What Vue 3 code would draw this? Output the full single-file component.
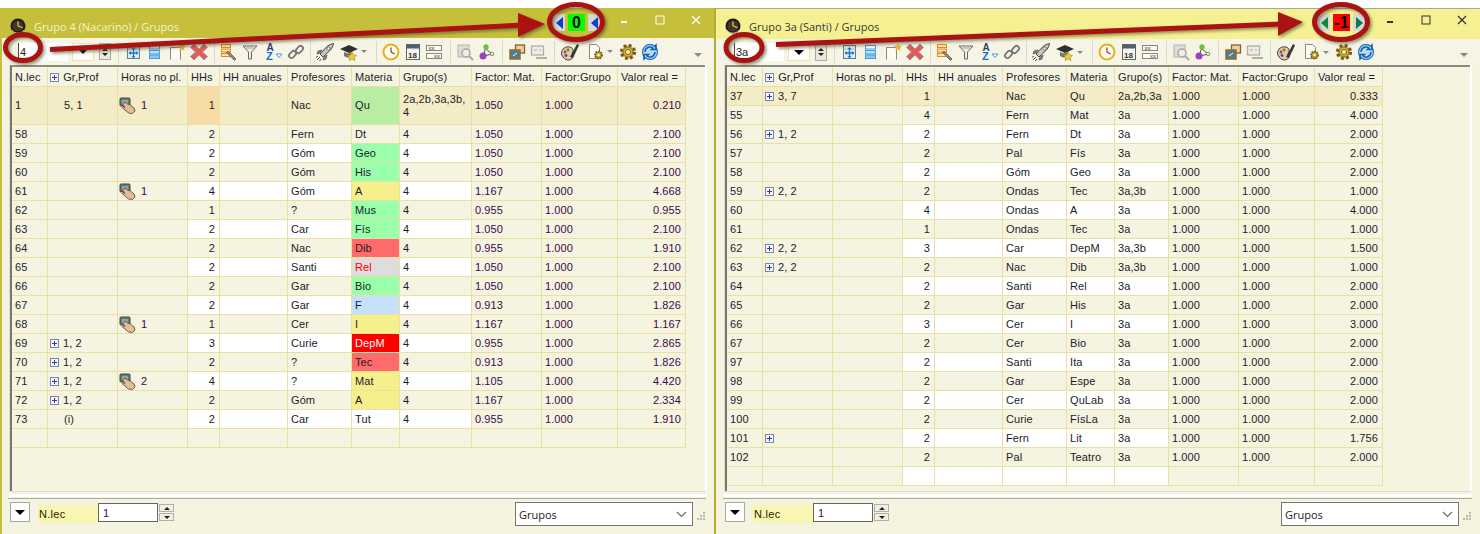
<template>
  <div class="desktop">
    <svg class="defs" width="0" height="0">
      <defs>
        <symbol id="i-clock-dark" viewBox="0 0 16 16">
          <circle cx="8" cy="8" r="7.500" fill="#1e1a16"/>
          <circle cx="8" cy="8" r="5.600" fill="#40362a"/>
          <path d="M8 8V3.500M8 8l4.500 1.600" stroke="#f0c040" stroke-width="1.300" fill="none"/>
          <path d="M2 12a7.500 7.500 0 0 0 12 0" stroke="#b0a890" stroke-width="1" fill="none"/>
        </symbol>
        <symbol id="i-move" viewBox="0 0 20 20">
          <rect x="4.500" y="3.500" width="12" height="13" fill="#e4ecf0" stroke="#5f7f96"/>
          <path d="M4.500 7h12" stroke="#a8bcc8"/>
          <path d="M10.500 6v9M6.500 11h8" stroke="#1478c0" stroke-width="1.300"/>
          <path d="M10.500 5l2 2.200h-4zM10.500 16.500l2-2.200h-4zM5.500 11l2.200-2v4zM15.500 11l-2.200-2v4z" fill="#1478c0"/>
        </symbol>
        <symbol id="i-rows" viewBox="0 0 20 20">
          <rect x="5.500" y="3.500" width="10" height="3.500" fill="#fbfdff" stroke="#3f9fe0"/>
          <rect x="5.500" y="8.500" width="10" height="3.500" fill="#bfe0f8" stroke="#3f9fe0"/>
          <rect x="5.500" y="13" width="10" height="3.500" fill="#8fc8f0" stroke="#3f9fe0"/>
        </symbol>
        <symbol id="i-page" viewBox="0 0 20 20">
          <path d="M2.500 17.500v-12h10v12" fill="#fbfbf4" stroke="#8a8a80"/>
          <path d="M14 1l1 2.500 3 .5-2 2 .6 3-2.600-1.500-2.600 1.500.6-3-2-2 3-.5z" fill="#e8b830"/>
        </symbol>
        <symbol id="i-x" viewBox="0 0 20 20">
          <path d="M5 2l5 5 5-5 3.500 3.500-5 4.500 5 4.500L15 18l-5-5-5 5-3.500-3.500 5-4.500-5-4.500z" fill="#e85858" stroke="#9a9a98"/>
        </symbol>
        <symbol id="i-lines" viewBox="0 0 20 20">
          <rect x="2.500" y="2.500" width="9" height="3" fill="#fbe2b8" stroke="#e88a10"/>
          <rect x="2.500" y="7" width="9" height="3" fill="#fbe2b8" stroke="#e88a10"/>
          <rect x="2.500" y="11.500" width="9" height="3" fill="#fbe2b8" stroke="#e88a10"/>
          <path d="M9 9l8 8-1.500 1.500-8-8z" fill="#8a8a80" stroke="#404040" stroke-width=".6"/>
        </symbol>
        <symbol id="i-funnel" viewBox="0 0 20 20">
          <path d="M3 4h14l-5.500 6v7h-3v-7z" fill="#eeeee6" stroke="#6a6a66"/>
          <path d="M5.500 6h9" stroke="#a0a09a"/>
        </symbol>
        <symbol id="i-az" viewBox="0 0 20 20">
          <text x="3.500" y="8.500" font-size="10" font-weight="700" font-family="Liberation Sans, sans-serif" fill="#2a3f70">A</text>
          <text x="3" y="18" font-size="11" font-weight="700" font-family="Liberation Sans, sans-serif" fill="#1070c8">Z</text>
          <path d="M13 12h6l-3 3.500z" fill="#fff" stroke="#3f9fe0"/>
        </symbol>
        <symbol id="i-chain" viewBox="0 0 20 20">
          <rect x="2.500" y="10" width="8" height="5" rx="2.500" transform="rotate(-45 6.500 12.500)" fill="none" stroke="#77777a" stroke-width="1.800"/>
          <rect x="9.500" y="5" width="8" height="5" rx="2.500" transform="rotate(-45 13.500 7.500)" fill="none" stroke="#77777a" stroke-width="1.800"/>
        </symbol>
        <symbol id="i-rocket" viewBox="0 0 20 20">
          <path d="M5 12L12 4.500Q15 2 18.500 1.500 18 5 15.500 8L8 15z" fill="#c4c4c0" stroke="#4a4a46"/>
          <path d="M7 8L3 9l-1 3 3-1zM12 13l-1 4-3 1 1-3z" fill="#8a8a86" stroke="#4a4a46" stroke-width=".7"/>
          <circle cx="13.500" cy="6.500" r="1.500" fill="#fff" stroke="#4a4a46" stroke-width=".7"/>
          <path d="M2 18l3-3M1 15.500l2-1.500M4.500 19l1.500-2" stroke="#4a4a46"/>
        </symbol>
        <symbol id="i-cap" viewBox="0 0 20 20">
          <path d="M1 7l9-4 9 4-9 4z" fill="#30302c"/>
          <path d="M5 10v4c3 2 7 2 8 0v-4l-4 1.500z" fill="#77776f"/>
          <path d="M13 10l1.500 3 3 .5-2.200 2 .5 3-2.800-1.500-2.800 1.500.5-3-2.200-2 3-.5z" fill="#f0d030" stroke="#8a7010" stroke-width=".5"/>
        </symbol>
        <symbol id="i-clock" viewBox="0 0 20 20">
          <circle cx="10" cy="10" r="7.500" fill="#fdfdf2" stroke="#e8b020" stroke-width="2"/>
          <path d="M10 5.500V10l3.500 2" fill="none" stroke="#a03020" stroke-width="1.200"/>
        </symbol>
        <symbol id="i-cal" viewBox="0 0 20 20">
          <rect x="3.500" y="2.500" width="13" height="15" fill="#f4f4f0" stroke="#66665f"/>
          <rect x="4" y="3" width="12" height="3.500" fill="#4a5f7a"/>
          <text x="5" y="15.500" font-size="8" font-weight="700" font-family="Liberation Sans, sans-serif" fill="#333">18</text>
        </symbol>
        <symbol id="i-xx" viewBox="0 0 20 20">
          <rect x="2.500" y="3.500" width="15" height="5" fill="#fbfbf4" stroke="#88887f"/>
          <rect x="2.500" y="11.500" width="15" height="5" fill="#fbfbf4" stroke="#88887f"/>
          <text x="4.500" y="8" font-size="6" font-family="Liberation Sans, sans-serif" fill="#333">xx</text>
          <text x="10" y="16" font-size="6" font-family="Liberation Sans, sans-serif" fill="#333">xx</text>
        </symbol>
        <symbol id="i-search" viewBox="0 0 20 20">
          <rect x="3" y="3" width="11" height="12" fill="#dcdcd8" stroke="#b4b4b0"/>
          <circle cx="11" cy="11" r="4" fill="#eeeeea" stroke="#a8a8a4" stroke-width="1.500"/>
          <path d="M14 14l4 4" stroke="#a8a8a4" stroke-width="2"/>
        </symbol>
        <symbol id="i-mol" viewBox="0 0 20 20">
          <path d="M9 5l-3 9M9 7l6 5M7 14l8-2" stroke="#55554f"/>
          <circle cx="9" cy="5" r="2.700" fill="#70c040"/>
          <circle cx="6" cy="14" r="3.500" fill="#a040c0"/>
          <circle cx="15" cy="12" r="1.800" fill="#e8e8e0" stroke="#66665f" stroke-width=".7"/>
        </symbol>
        <symbol id="i-wins" viewBox="0 0 20 20">
          <rect x="8.500" y="3" width="9" height="8" fill="#e8d0a8" stroke="#8a6020" stroke-width="1.300"/>
          <rect x="3" y="8" width="10" height="9" fill="#4a7f9a" stroke="#9a6a20" stroke-width="1.500"/>
          <path d="M6 14l4-3" stroke="#fff"/>
        </symbol>
        <symbol id="i-wins-grey" viewBox="0 0 20 20">
          <rect x="2.500" y="4" width="12" height="9" fill="#ecece6" stroke="#b0b0ac" stroke-width="1.300"/>
          <path d="M7 16h11" stroke="#b0b0ac" stroke-width="2"/>
          <path d="M5 8h3M10 8h2" stroke="#b0b0ac"/>
        </symbol>
        <symbol id="i-palette" viewBox="0 0 20 20">
          <path d="M1.500 11c0-4 4-7 8.500-6 3 .8 3.500 3 2.500 5.500-1 2 1 3 0 5.500-1 2-4.500 2.500-6.500 1.500C4 16.500 1.500 14 1.500 11z" fill="#e8c8a0" stroke="#45403a"/>
          <circle cx="5" cy="10" r="1.400" fill="#d03030"/>
          <circle cx="8" cy="8" r="1.400" fill="#30a040"/>
          <circle cx="6" cy="13.500" r="1.400" fill="#3050d0"/>
          <path d="M10 15L17 2l2 1.200L13 16z" fill="#3a3530"/>
        </symbol>
        <symbol id="i-docgear" viewBox="0 0 20 20">
          <path d="M3.500 2.500h7l3 3v11h-10z" fill="#fbfbf4" stroke="#8a8a80"/>
          <circle cx="12.500" cy="13" r="3.500" fill="#c8a020" stroke="#6a5a10" stroke-width="1.800" stroke-dasharray="1.600 1"/>
          <circle cx="12.500" cy="13" r="1.200" fill="#fff"/>
        </symbol>
        <symbol id="i-gear" viewBox="0 0 20 20">
          <circle cx="10" cy="10" r="6.500" fill="#d8b030" stroke="#6a5a20" stroke-width="3.200" stroke-dasharray="2.700 2.400"/>
          <circle cx="10" cy="10" r="4.800" fill="#d8b030" stroke="#8a7420" stroke-width=".8"/>
          <circle cx="10" cy="10" r="2.500" fill="#f4f0c0" stroke="#7a6a20"/>
        </symbol>
        <symbol id="i-refresh" viewBox="0 0 20 20">
          <circle cx="10" cy="10" r="7.500" fill="#b8dcf4" stroke="#2f7fc8" stroke-width="1.300"/>
          <path d="M5 10a5 5 0 0 1 8-4l-1.500 1.500h4.500V3l-1.500 1.500M15 10a5 5 0 0 1-8 4l1.500-1.500H4V17l1.500-1.500" fill="none" stroke="#1060b0" stroke-width="1.500"/>
        </symbol>
        <symbol id="i-hand" viewBox="0 0 17 17">
          <rect x="1" y="1" width="10" height="8" rx="1" fill="#5f7f78" stroke="#4a4038"/>
          <rect x="3" y="3" width="6" height="4" fill="#8aa8a0"/>
          <path d="M6 5l2.500 2 3 1 3.500 3 1 3-2.500 2.500-4-.5-3.500-3-3-2.500 1-1 2 1-2-3z" fill="#e4bd98" stroke="#5f5040" stroke-width=".9"/>
        </symbol>
      </defs>
    </svg>

    <section v-for="win in windows" :key="win.id" class="win" :class="win.id">
      <header class="title">
        <svg class="title-icon" width="16" height="16"><use href="#i-clock-dark" /></svg>
        <span class="title-text">{{ win.title }}</span>
        <div class="nav">
          <span class="nav-btn"><i class="tri" :class="win.id === 'win-a' ? 'tri-blue' : 'tri-green'"></i></span>
          <span class="nav-value" :class="win.balanceCls">{{ win.balance }}</span>
          <span class="nav-btn"><i class="tri" :class="win.lastTri"></i></span>
        </div>
        <div class="wbtn">
          <svg width="10" height="10" viewBox="0 0 10 10"><path d="M2 7h6" stroke-width="2" /></svg>
        </div>
        <div class="wbtn">
          <svg width="10" height="10" viewBox="0 0 10 10"><rect x="1" y="1" width="8" height="8" fill="none" stroke-width="1" /></svg>
        </div>
        <div class="wbtn">
          <svg width="10" height="10" viewBox="0 0 10 10"><path d="M1 1l8 8M9 1l-8 8" stroke-width="1.300" /></svg>
        </div>
      </header>

      <div class="toolbar">
        <input class="tb-input" :value="win.group" readonly />
        <div class="tb-combo"><i class="down"></i></div>
        <div class="tb-spin"><i class="up-s"></i><i class="down-s"></i></div>
        <template v-for="(t, i) in tools" :key="i">
          <span v-if="t.sep" class="sep" :style="{ marginLeft: t.gap + 'px' }"></span>
          <span v-else-if="t.more" class="more" :style="{ marginLeft: t.gap + 'px' }"></span>
          <svg v-else class="tool" width="20" height="20" :style="{ marginLeft: t.gap + 'px' }"><use :href="'#i-' + t.id" /></svg>
        </template>
        <span class="more more-end"></span>
      </div>

      <div class="main">
        <div class="frame">
          <div class="frame-in">
            <div class="grid" :style="{ gridTemplateColumns: win.cols.map(c => c + 'px').join(' ') }">
              <div v-for="(h, i) in heads" :key="h" class="cell head">
                <svg v-if="i === 1" class="plus" width="9" height="9" viewBox="0 0 9 9"><rect x=".5" y=".5" width="8" height="8" fill="#f4f4fa" stroke="#7a86b0" /><path d="M2 4.500h5M4.500 2v5" stroke="#30408a" /></svg>
                {{ h }}
              </div>
              <template v-for="(r, i) in win.rows" :key="win.id + i">
                <div class="cell" :class="base(r, i, false)">{{ r.n }}</div>
                <div class="cell gr" :class="base(r, i, false)">
                  <svg v-if="r.plus" class="plus" width="9" height="9" viewBox="0 0 9 9"><rect x=".5" y=".5" width="8" height="8" fill="#f4f4fa" stroke="#7a86b0" /><path d="M2 4.500h5M4.500 2v5" stroke="#30408a" /></svg>
                  <span v-else class="plus-gap"></span>
                  {{ r.gr }}
                </div>
                <div class="cell hours" :class="base(r, i, false)">
                  <template v-if="r.hand">
                    <svg class="hand" width="17" height="17"><use href="#i-hand" /></svg>
                    <span class="purple">{{ r.hand }}</span>
                  </template>
                </div>
                <div class="cell num" :class="[base(r, i, true), r.hhCls]">{{ r.hh }}</div>
                <div class="cell" :class="base(r, i, true)"></div>
                <div class="cell" :class="base(r, i, true)">{{ r.prof }}</div>
                <div class="cell" :class="[base(r, i, true), r.matCls]">{{ r.mat }}</div>
                <div class="cell" :class="base(r, i, true)">{{ r.grp }}</div>
                <div class="cell" :class="[base(r, i, false), win.numCls]">{{ r.fm }}</div>
                <div class="cell" :class="[base(r, i, false), win.numCls]">{{ r.fg }}</div>
                <div class="cell num" :class="[base(r, i, false), win.numCls]">{{ r.val }}</div>
              </template>
            </div>
          </div>
        </div>
      </div>

      <footer class="foot">
        <button class="foot-btn"><i class="down"></i></button>
        <span class="foot-label">N.lec</span>
        <input class="foot-input" value="1" readonly />
        <div class="foot-spin"><span><i class="up-s"></i></span><span><i class="down-s"></i></span></div>
        <div class="foot-combo">
          <span>Grupos</span>
          <svg width="11" height="7" viewBox="0 0 11 7"><path d="M1 1l4.500 4.500L10 1" fill="none" stroke="#6a6a6a" stroke-width="1.200" /></svg>
        </div>
        <svg class="grip" width="9" height="8" viewBox="0 0 9 8"><path d="M7 0h2v2H7zM4 3h2v2H4zM7 3h2v2H7zM1 6h2v2H1zM4 6h2v2H4zM7 6h2v2H7z" fill="#b8b8b0" /></svg>
      </footer>
    </section>

    <!-- anotaciones rojas encima de las ventanas -->
    <svg class="marks" width="1480" height="534" viewBox="0 0 1480 534">
      <g class="mark">
        <path d="M50 49.500L522 25" fill="none" />
        <path d="M518 13l27 11-27 13z" class="head-fill" />
        <ellipse cx="23" cy="47.500" rx="17.500" ry="13" />
        <ellipse cx="576" cy="22" rx="26.500" ry="17.500" />
      </g>
      <g class="mark">
        <path d="M776 44.500L1282 24" fill="none" />
        <path d="M1278 12l25 10-25 14z" class="head-fill" />
        <ellipse cx="744" cy="47.500" rx="18" ry="13" />
        <ellipse cx="1341" cy="22" rx="26.500" ry="17.500" />
      </g>
    </svg>
  </div>
</template>

<script setup>
const heads = ['N.lec', 'Gr,Prof', 'Horas no pl.', 'HHs', 'HH anuales', 'Profesores', 'Materia', 'Grupo(s)', 'Factor: Mat.', 'Factor:Grupo', 'Valor real =']

// gr empieza con + si la fila lleva el cuadrito de expandir
const row = (n, gr, hand, hh, prof, mat, matCls, grp, fm, fg, val, extra = {}) => ({
  n,
  plus: gr.startsWith('+'),
  gr: gr.replace('+', ''),
  hand,
  hh,
  prof,
  mat,
  matCls,
  grp,
  fm,
  fg,
  val,
  ...extra
})

const blank = () => row('', '', '', '', '', '', '', '', '', '', '')

const rowsA = [
  row('1', '5, 1', '1', '1', 'Nac', 'Qu', 'm-lime', '2a,2b,3a,3b, 4', '1.050', '1.000', '0.210', { hl: true, tall: true, hhCls: 'hh-orange' }),
  row('58', '', '', '2', 'Fern', 'Dt', '', '4', '1.050', '1.000', '2.100'),
  row('59', '', '', '2', 'Góm', 'Geo', 'm-green', '4', '1.050', '1.000', '2.100'),
  row('60', '', '', '2', 'Góm', 'His', 'm-green', '4', '1.050', '1.000', '2.100'),
  row('61', '', '1', '4', 'Góm', 'A', 'm-yellow', '4', '1.167', '1.000', '4.668'),
  row('62', '', '', '1', '?', 'Mus', 'm-green', '4', '0.955', '1.000', '0.955'),
  row('63', '', '', '2', 'Car', 'Fís', 'm-green', '4', '1.050', '1.000', '2.100'),
  row('64', '', '', '2', 'Nac', 'Dib', 'm-salmon', '4', '0.955', '1.000', '1.910'),
  row('65', '', '', '2', 'Santi', 'Rel', 'm-grey', '4', '1.050', '1.000', '2.100'),
  row('66', '', '', '2', 'Gar', 'Bio', 'm-green', '4', '1.050', '1.000', '2.100'),
  row('67', '', '', '2', 'Gar', 'F', 'm-blue', '4', '0.913', '1.000', '1.826'),
  row('68', '', '1', '1', 'Cer', 'I', 'm-yellow m-purple', '4', '1.167', '1.000', '1.167'),
  row('69', '+1, 2', '', '3', 'Curie', 'DepM', 'm-red', '4', '0.955', '1.000', '2.865'),
  row('70', '+1, 2', '', '2', '?', 'Tec', 'm-salmon', '4', '0.913', '1.000', '1.826'),
  row('71', '+1, 2', '2', '4', '?', 'Mat', 'm-yellow', '4', '1.105', '1.000', '4.420'),
  row('72', '+1, 2', '', '2', 'Góm', 'A', 'm-yellow', '4', '1.167', '1.000', '2.334'),
  row('73', '(i)', '', '2', 'Car', 'Tut', '', '4', '0.955', '1.000', '1.910'),
  blank()
]

const rowsB = [
  row('37', '+3, 7', '', '1', 'Nac', 'Qu', '', '2a,2b,3a', '1.000', '1.000', '0.333', { hl: true }),
  row('55', '', '', '4', 'Fern', 'Mat', '', '3a', '1.000', '1.000', '4.000'),
  row('56', '+1, 2', '', '2', 'Fern', 'Dt', '', '3a', '1.000', '1.000', '2.000'),
  row('57', '', '', '2', 'Pal', 'Fís', '', '3a', '1.000', '1.000', '2.000'),
  row('58', '', '', '2', 'Góm', 'Geo', '', '3a', '1.000', '1.000', '2.000'),
  row('59', '+2, 2', '', '2', 'Ondas', 'Tec', '', '3a,3b', '1.000', '1.000', '1.000'),
  row('60', '', '', '4', 'Ondas', 'A', '', '3a', '1.000', '1.000', '4.000'),
  row('61', '', '', '1', 'Ondas', 'Tec', '', '3a', '1.000', '1.000', '1.000'),
  row('62', '+2, 2', '', '3', 'Car', 'DepM', '', '3a,3b', '1.000', '1.000', '1.500'),
  row('63', '+2, 2', '', '2', 'Nac', 'Dib', '', '3a,3b', '1.000', '1.000', '1.000'),
  row('64', '', '', '2', 'Santi', 'Rel', '', '3a', '1.000', '1.000', '2.000'),
  row('65', '', '', '2', 'Gar', 'His', '', '3a', '1.000', '1.000', '2.000'),
  row('66', '', '', '3', 'Cer', 'I', 'm-purple', '3a', '1.000', '1.000', '3.000'),
  row('67', '', '', '2', 'Cer', 'Bio', '', '3a', '1.000', '1.000', '2.000'),
  row('97', '', '', '2', 'Santi', 'Ita', '', '3a', '1.000', '1.000', '2.000'),
  row('98', '', '', '2', 'Gar', 'Espe', '', '3a', '1.000', '1.000', '2.000'),
  row('99', '', '', '2', 'Cer', 'QuLab', '', '3a', '1.000', '1.000', '2.000'),
  row('100', '', '', '2', 'Curie', 'FísLa', '', '3a', '1.000', '1.000', '2.000'),
  row('101', '+', '', '2', 'Fern', 'Lit', '', '3a', '1.000', '1.000', '1.756'),
  row('102', '', '', '2', 'Pal', 'Teatro', '', '3a', '1.000', '1.000', '2.000'),
  blank()
]

const windows = [
  {
    id: 'win-a',
    title: 'Grupo 4 (Nacarino) / Grupos',
    group: '4',
    balance: '0',
    balanceCls: 'ok',
    lastTri: 'tri-blue',
    numCls: 'num-purple',
    cols: [36, 70, 70, 32, 68, 64, 48, 72, 70, 76, 68],
    rows: rowsA
  },
  {
    id: 'win-b',
    title: 'Grupo 3a (Santi) / Grupos',
    group: '3a',
    balance: '-1',
    balanceCls: 'bad',
    lastTri: 'tri-right',
    numCls: '',
    cols: [36, 70, 70, 32, 68, 64, 48, 54, 70, 76, 68],
    rows: rowsB
  }
]

const tools = [
  { sep: true, gap: 7 },
  { id: 'move', gap: 4 },
  { id: 'rows', gap: 1 },
  { id: 'page', gap: 4 },
  { id: 'x', gap: 1 },
  { sep: true, gap: 5 },
  { id: 'lines', gap: 4 },
  { id: 'funnel', gap: 1 },
  { id: 'az', gap: 3 },
  { id: 'chain', gap: 3 },
  { sep: true, gap: 4 },
  { id: 'rocket', gap: 4 },
  { id: 'cap', gap: 4 },
  { more: true, gap: 2 },
  { sep: true, gap: 7 },
  { id: 'clock', gap: 4 },
  { id: 'cal', gap: 2 },
  { id: 'xx', gap: 1 },
  { sep: true, gap: 6 },
  { id: 'search', gap: 4 },
  { id: 'mol', gap: 2 },
  { sep: true, gap: 5 },
  { id: 'wins', gap: 4 },
  { id: 'wins-grey', gap: 2 },
  { sep: true, gap: 5 },
  { id: 'palette', gap: 5 },
  { id: 'docgear', gap: 6 },
  { more: true, gap: 1 },
  { id: 'gear', gap: 3 },
  { id: 'refresh', gap: 2 }
]

// las columnas centrales alternan blanco y crema, las demas siempre crema
const base = (r, i, striped) => ({
  hl: r.hl,
  tall: r.tall,
  white: striped && !r.hl && i % 2 === 0
})
</script>

<style>
html,
body {
  margin: 0;
  background: #fff;
  overflow: hidden;
}
</style>

<style scoped>
.desktop {
  position: relative;
  display: flex;
  box-sizing: border-box;
  width: 1480px;
  height: 534px;
  padding-top: 8px;
  font-family: "Liberation Sans", Arial, sans-serif;
  font-size: 11px;
  color: #1c1c28;
}

.defs {
  position: absolute;
}

.win {
  display: flex;
  flex-direction: column;
  box-sizing: border-box;
  background: #f5f4e1;
}

.win-a {
  width: 716px;
  border-left: 2px solid #c5bf3b;
  border-right: 2px solid #b3ad36;
}

.win-b {
  width: 764px;
}

.title {
  display: flex;
  align-items: flex-start;
  flex: none;
  height: 30px;
  font-family: "Open Sans", "Noto Sans", sans-serif;
  font-size: 11px;
}

.win-a .title {
  background: #c5bf3b;
  color: #f6f3cf;
}

.win-b .title {
  background: #f5f091;
  box-shadow: inset 0 1px 0 #a8a8a0;
  color: #3a3a3a;
  height: 31px;
}

.title-icon {
  margin: 10px 8px 0;
  flex: none;
}

.win-b .title-icon {
  margin-left: 9px;
}

.title-text {
  margin-top: 11px;
  line-height: 16px;
}

.nav {
  display: flex;
  gap: 3px;
  margin: 6px 6px 0 auto;
}

.win-b .nav {
  margin-right: 7px;
}

.nav-btn {
  display: flex;
  align-items: center;
  justify-content: center;
  width: 12px;
  height: 17px;
  background: #d8d8d4;
}

.nav-value {
  width: 17px;
  height: 17px;
  font: 700 16px/17px "Liberation Sans", sans-serif;
  text-align: center;
  color: #000;
}

.nav-value.ok {
  background: #00ff00;
}

.nav-value.bad {
  background: #ff0000;
}

.tri {
  display: block;
  width: 0;
  height: 0;
  border-top: 6px solid transparent;
  border-bottom: 6px solid transparent;
  border-right: 7px solid #0a3fd0;
}

.tri-green {
  border-right-color: #0a8a3a;
}

.tri-right {
  border-right: none;
  border-left: 7px solid #0a7a5a;
}

.wbtn {
  display: flex;
  justify-content: center;
  width: 36px;
  padding-top: 7px;
}

.wbtn svg {
  stroke: #fff;
}

.win-b .wbtn svg {
  stroke: #333;
}

.toolbar {
  display: flex;
  align-items: center;
  flex: none;
  height: 27px;
  box-sizing: border-box;
  padding-left: 16px;
  background: #f5f4e5;
}

.win-b .toolbar {
  height: 26px;
  padding-left: 18px;
}

.tb-input {
  box-sizing: border-box;
  width: 50px;
  height: 18px;
  margin: 0;
  padding: 0 1px;
  border: none;
  border-left: 1px solid #444;
  background: #fff;
  font: 11px "Liberation Sans", sans-serif;
  color: #222;
  outline: none;
}

.tb-combo {
  display: flex;
  align-items: center;
  justify-content: center;
  box-sizing: border-box;
  width: 22px;
  height: 18px;
  margin-left: 4px;
  border: 1px solid #ece6a0;
  background: #fff;
}

.tb-spin {
  display: flex;
  flex-direction: column;
  align-items: center;
  justify-content: center;
  gap: 2px;
  box-sizing: border-box;
  width: 12px;
  height: 17px;
  margin-left: 5px;
  border: 1px solid #a8a8a0;
  background: #e8e8e0;
}

.down {
  display: block;
  width: 0;
  height: 0;
  border-left: 5px solid transparent;
  border-right: 5px solid transparent;
  border-top: 5px solid #000;
}

.up-s,
.down-s {
  display: block;
  width: 0;
  height: 0;
  border-left: 3px solid transparent;
  border-right: 3px solid transparent;
}

.up-s {
  border-bottom: 3px solid #222;
}

.down-s {
  border-top: 3px solid #222;
}

.sep {
  flex: none;
  width: 1px;
  height: 22px;
  background: #d8d8c8;
}

.tool {
  flex: none;
}

.more {
  flex: none;
  width: 0;
  height: 0;
  margin-right: 2px;
  border-left: 3px solid transparent;
  border-right: 3px solid transparent;
  border-top: 3px solid #888;
}

.more-end {
  margin: 6px 12px 0 auto;
  border-left-width: 4px;
  border-right-width: 4px;
  border-top-width: 4px;
}

.main {
  flex: 1;
  min-height: 0;
  padding: 0 7px 6px;
}

.win-b .main {
  padding: 0 8px 6px;
}

.frame {
  box-sizing: border-box;
  height: 100%;
  border: 1px solid #dfdfd0;
  border-top: none;
  border-right: 2px solid #fff;
  box-shadow: 0 2px 0 #f5f4e1, 0 5px 0 #fff;
}

.frame-in {
  box-sizing: border-box;
  height: 100%;
  border-left: 2px solid #77776f;
  border-top: 2px solid #8a8a82;
}

.grid {
  display: grid;
  width: fit-content;
}

.cell {
  box-sizing: border-box;
  height: 19px;
  padding: 0 3px;
  border-right: 1px solid #e8e1a3;
  border-bottom: 1px solid #e8e1a3;
  line-height: 18px;
  background: #f5f4e1;
  letter-spacing: 0.1px;
  white-space: nowrap;
  overflow: hidden;
}

.head {
  height: 20px;
  padding-top: 1px;
}

.head:nth-child(2) {
  padding-left: 2px;
}

.head .plus {
  margin-right: 1px;
}

.tall {
  display: flex;
  align-items: center;
  height: 38px;
  white-space: normal;
  line-height: 13px;
}

.gr {
  display: flex;
  align-items: center;
  padding-left: 2px;
}

.plus {
  flex: none;
  vertical-align: -1px;
}

.gr .plus {
  margin-right: 4px;
}

.plus-gap {
  flex: none;
  width: 13px;
  display: inline-block;
}

.gr > .plus-gap {
  margin-right: 1px;
}

.hours {
  display: flex;
  align-items: center;
  padding-left: 1px;
}

.hand {
  flex: none;
  margin-right: 5px;
}

.num {
  padding-right: 4px;
  text-align: right;
  justify-content: flex-end;
}

.white {
  background: #fff;
}

.hl {
  background: #f3ecc7;
}

.hh-orange {
  background: #f8dca8;
}

.purple,
.m-purple,
.num-purple {
  color: #3c0a4a;
}

.m-lime {
  background: #b9eda3;
}

.m-green {
  background: #99ffaa;
}

.m-yellow {
  background: #f5f08c;
}

.m-salmon {
  background: #ff6b6b;
}

.m-grey {
  background: #dddddd;
  color: #ff0000;
}

.m-blue {
  background: #c4e0fb;
}

.m-red {
  background: #ff0000;
  color: #fff;
}

.foot {
  display: flex;
  align-items: flex-start;
  flex: none;
  height: 36px;
  box-sizing: border-box;
  margin: 0 8px 0 6px;
  padding: 3px 0 0 2px;
  border-top: 1px solid #a8a8a4;
}

.win-b .foot {
  margin: 0 8px 0 7px;
  padding-left: 2px;
}

.foot-btn {
  display: flex;
  align-items: center;
  justify-content: center;
  box-sizing: border-box;
  width: 20px;
  height: 20px;
  padding: 0;
  border: 1px solid #a8a8a4;
  background: #fff;
}

.foot-label {
  width: 60px;
  height: 18px;
  margin: 3px 0 0 8px;
  padding-left: 1px;
  box-sizing: border-box;
  background: #f8f6b0;
  line-height: 18px;
  color: #2a2400;
  letter-spacing: 0.3px;
}

.foot-input {
  box-sizing: border-box;
  width: 60px;
  height: 19px;
  margin: 1px 0 0;
  padding: 0 4px;
  border: 1px solid #66665f;
  background: #fff;
  font: 11px "Liberation Sans", sans-serif;
  color: #3c0a4a;
  outline: none;
}

.foot-spin {
  display: flex;
  flex-direction: column;
  gap: 1px;
  width: 15px;
  margin: 2px 0 0 1px;
}

.foot-spin span {
  display: flex;
  align-items: center;
  justify-content: center;
  box-sizing: border-box;
  height: 8px;
  border: 1px solid #b0b0a8;
  background: #f0f0e4;
}

.foot-combo {
  display: flex;
  align-items: center;
  justify-content: space-between;
  box-sizing: border-box;
  width: 178px;
  height: 24px;
  margin: 0 3px 0 auto;
  padding: 0 5px 0 3px;
  border: 1px solid #77776f;
  background: #fff;
  font: 11px "Open Sans", "Noto Sans", sans-serif;
  color: #222;
}

.grip {
  margin: 10px 1px 0 0;
}

.marks {
  position: absolute;
  top: 0;
  left: 0;
  pointer-events: none;
}

.mark {
  stroke: #ab1212;
  stroke-width: 5;
  fill: none;
  filter: drop-shadow(2px 2px 1.5px rgba(70, 70, 40, 0.55));
}

.head-fill {
  fill: #ab1212;
  stroke: none;
}
</style>
